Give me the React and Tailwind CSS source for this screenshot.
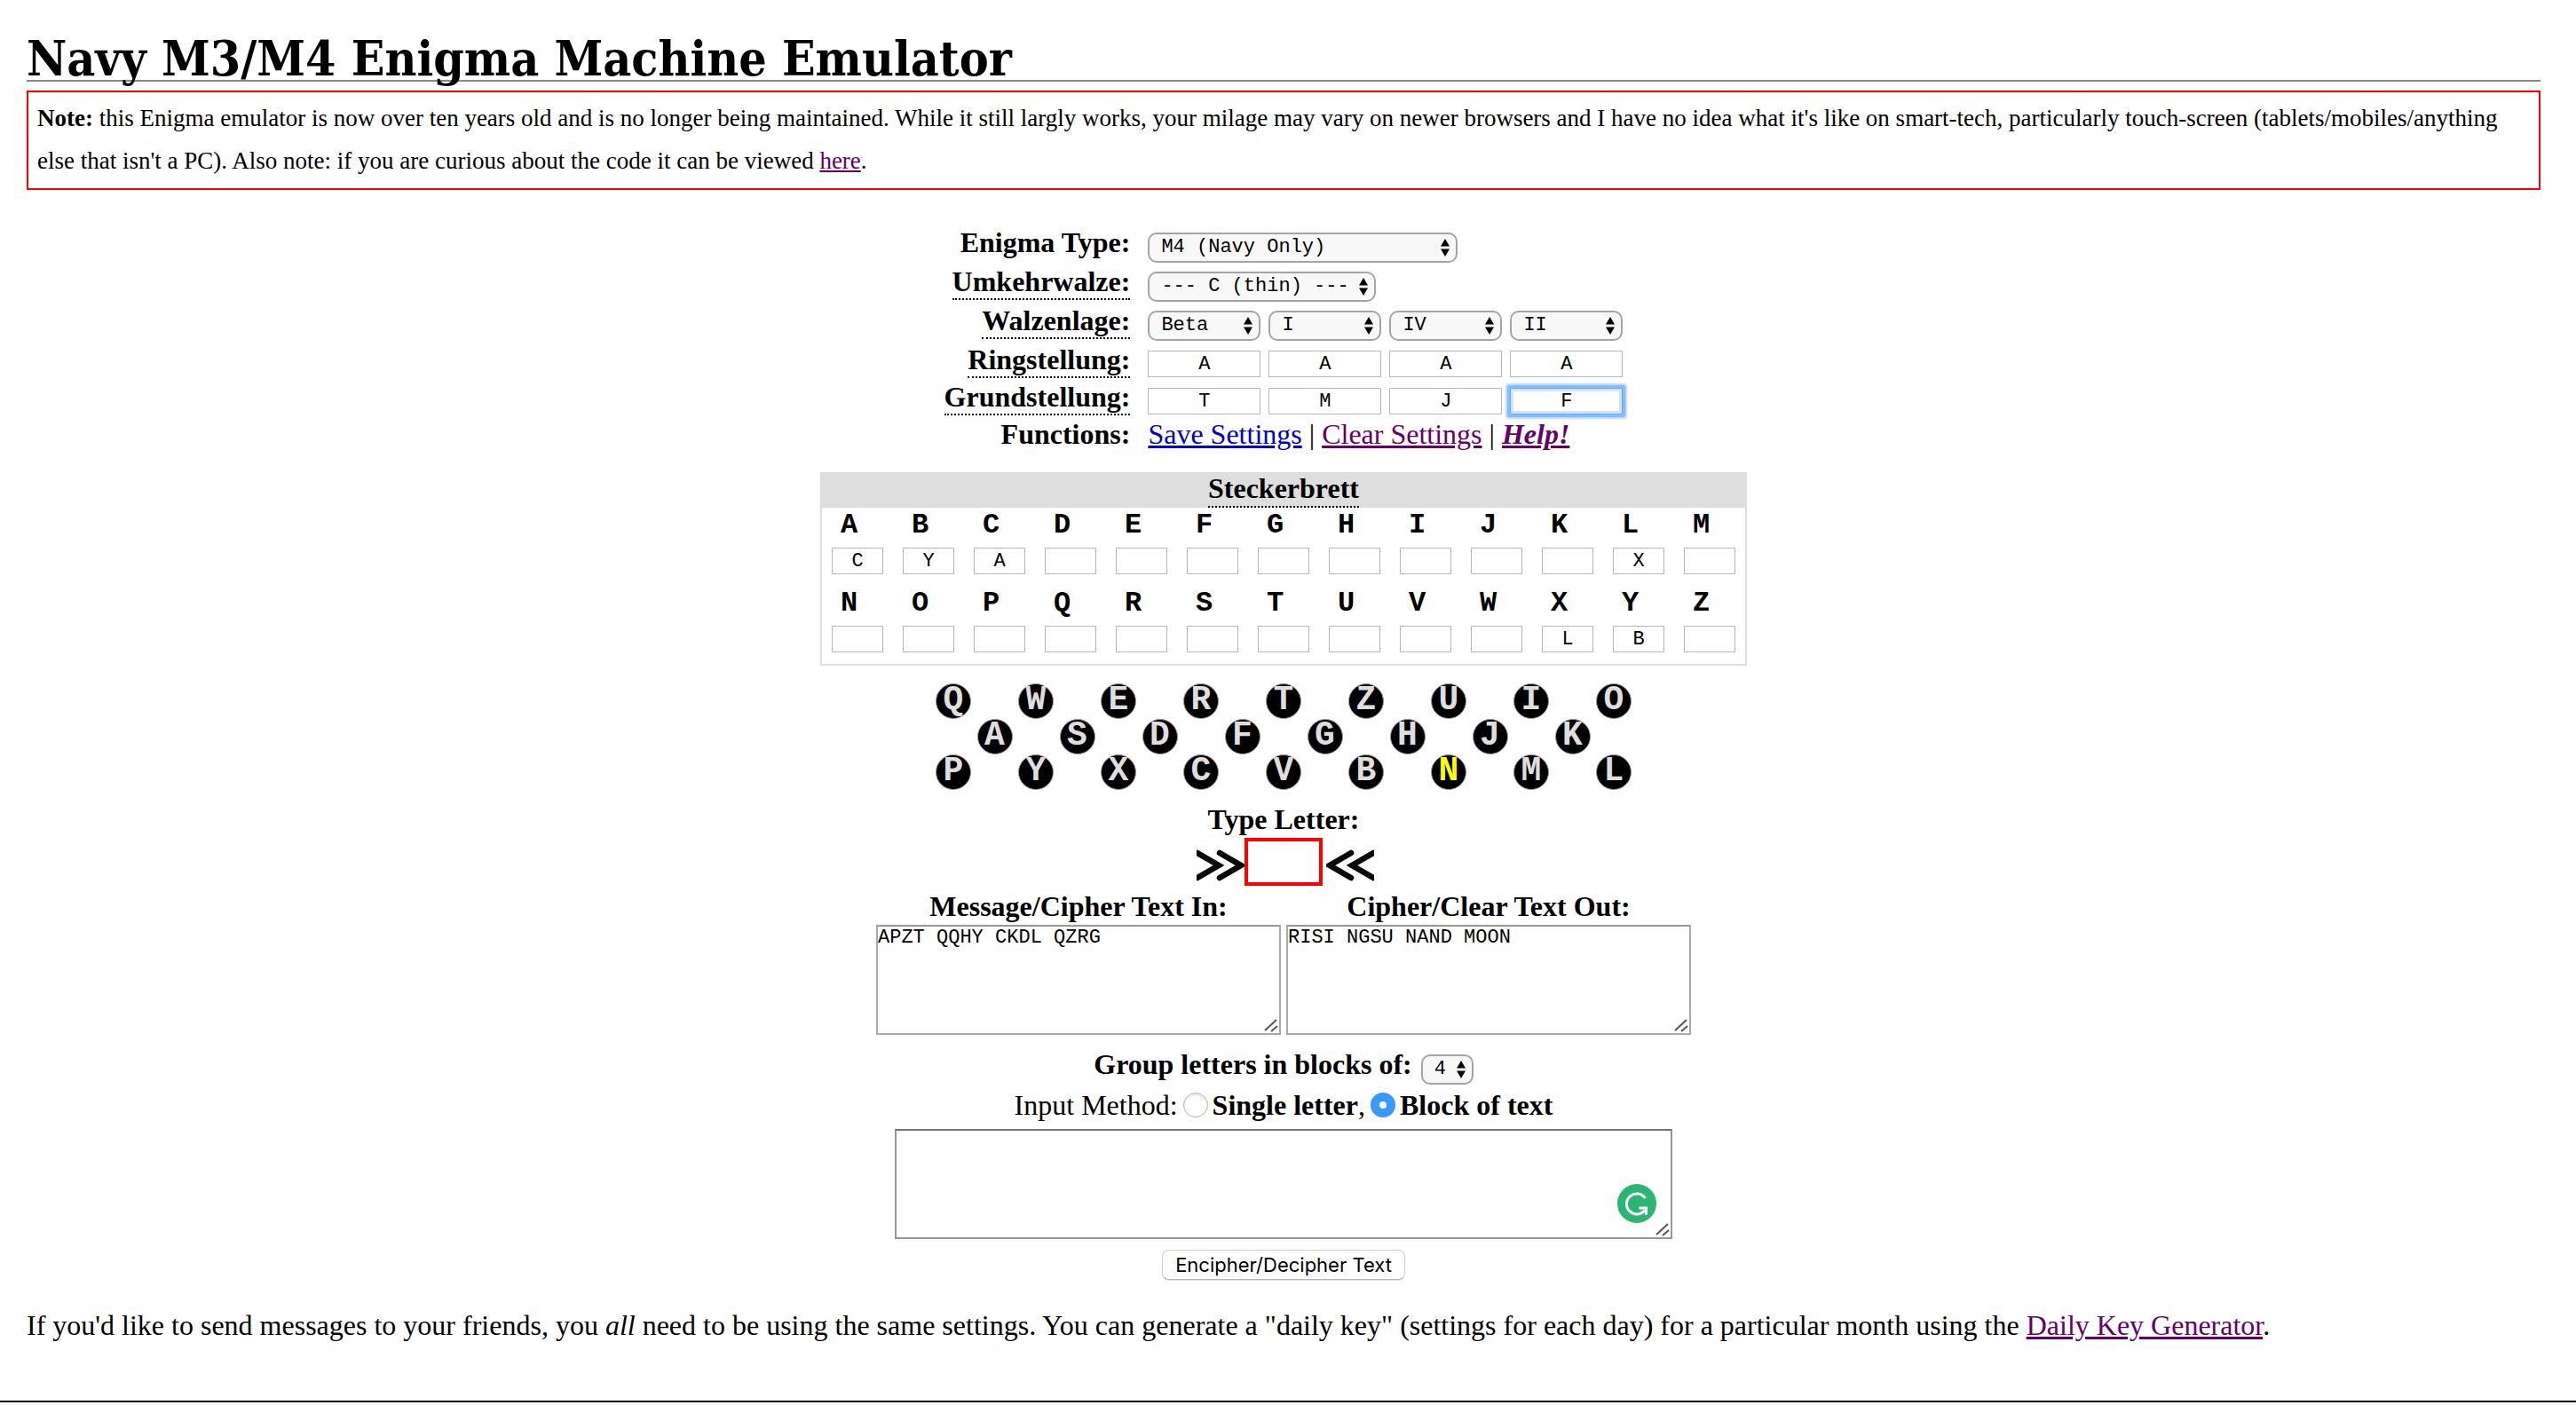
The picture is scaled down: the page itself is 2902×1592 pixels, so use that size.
import React from "react";

const MONO = "font-['Liberation_Mono','Courier_New',monospace]";

function Arrows() {
  return (
    <svg
      className="pointer-events-none absolute right-2 top-1/2 -translate-y-1/2"
      width="12"
      height="22"
      viewBox="0 0 12 22"
      aria-hidden="true"
    >
      <path d="M6 1l5 8.5H1zM6 21l5-8.5H1z" fill="#000" />
    </svg>
  );
}

function Select({ id, label, options, width }) {
  return (
    <span className={`relative block ${width}`}>
      <select
        id={id}
        aria-label={label}
        className={`${MONO} block h-[34px] w-full appearance-none rounded-[10px] border-2 border-[#a5a5a5] bg-[#f8f8f8] pl-[13px] text-[22px] leading-[30px] text-black`}
      >
        {options.map((o) => (
          <option key={o}>{o}</option>
        ))}
      </select>
      <Arrows />
    </span>
  );
}

function LetterInput({ id, label, value, width, focused }) {
  return (
    <input
      id={id}
      type="text"
      maxLength={1}
      aria-label={label}
      defaultValue={value}
      className={`${MONO} block h-[30px] border text-center text-[22px] leading-7 text-black ${width} ${
        focused
          ? "rounded-[1px] border-[#5fa8f5] shadow-[0_0_0_3px_#84bdfb,0_0_2px_5px_#b9d9fc,inset_0_0_0_3px_#cfe5fe]"
          : "border-[#b8b8b8]"
      }`}
    />
  );
}

function Row({ label, dotted, height, htmlFor, children, offset }) {
  return (
    <>
      <div className={`text-right font-bold ${height}`}>
        <label
          htmlFor={htmlFor}
          className={
            dotted
              ? "inline-block border-b-2 border-dotted border-black pb-px"
              : "inline-block"
          }
        >
          {label}
        </label>
      </div>
      <div className={`flex items-start gap-[9px] ${offset}`}>{children}</div>
    </>
  );
}

function Settings() {
  return (
    <form className="mx-auto mt-[41px] grid w-fit grid-cols-[auto_auto] gap-x-5">
      <Row label="Enigma Type:" height="h-11" offset="pt-[7px]" htmlFor="type">
        <Select id="type" options={["M4 (Navy Only)", "M3"]} width="w-[349px]" />
      </Row>
      <Row label="Umkehrwalze:" dotted height="h-11" offset="pt-[7px]" htmlFor="ukw">
        <Select id="ukw" options={["--- C (thin) ---", "--- B (thin) ---"]} width="w-[257px]" />
      </Row>
      <Row label="Walzenlage:" dotted height="h-11" offset="pt-[7px]" htmlFor="rotor0">
        {["Beta", "I", "IV", "II"].map((r, i) => (
          <Select key={r} id={`rotor${i}`} label={`Walzenlage ${i + 1}`} options={[r]} width="w-[127px]" />
        ))}
      </Row>
      <Row label="Ringstellung:" dotted height="h-[42px]" offset="pt-2" htmlFor="ring0">
        {["A", "A", "A", "A"].map((v, i) => (
          <LetterInput key={i} id={`ring${i}`} label={`Ringstellung ${i + 1}`} value={v} width="w-[127px]" />
        ))}
      </Row>
      <Row label="Grundstellung:" dotted height="h-[42px]" offset="pt-2" htmlFor="ground0">
        {["T", "M", "J", "F"].map((v, i) => (
          <LetterInput
            key={i}
            id={`ground${i}`}
            label={`Grundstellung ${i + 1}`}
            value={v}
            width="w-[127px]"
            focused={i === 3}
          />
        ))}
      </Row>
      <div className="text-right font-bold">Functions:</div>
      <div className="whitespace-nowrap">
        <a href="#save" className="text-[#0000cc] underline">Save Settings</a>
        {" | "}
        <a href="#clear" className="text-[#660066] underline">Clear Settings</a>
        {" | "}
        <a href="#help" className="font-bold italic text-[#660066] underline">Help!</a>
      </div>
    </form>
  );
}

const PLUGS = { A: "C", B: "Y", C: "A", L: "X", X: "L", Y: "B" };

function Steckerbrett() {
  return (
    <section className="mx-auto mt-[25px] w-fit border-2 border-t-0 border-[#dedede]">
      <h2 className="h-10 bg-[#dedede] text-center font-bold">
        <span className="inline-block border-b-2 border-dotted border-black pb-[2px]">Steckerbrett</span>
      </h2>
      <div className="grid grid-cols-[repeat(13,80px)]">
        {"ABCDEFGHIJKLMNOPQRSTUVWXYZ".split("").map((c) => (
          <div key={c} className="pb-[13px] pl-[11px]">
            <label htmlFor={`plug${c}`} className={`${MONO} block pb-[5px] pl-[10px] text-[32px] leading-10 font-bold`}>
              {c}
            </label>
            <LetterInput id={`plug${c}`} value={PLUGS[c] || ""} width="w-[58px]" />
          </div>
        ))}
      </div>
    </section>
  );
}

function Lamps() {
  return (
    <div className="mt-5 flex flex-col items-center">
      {["QWERTZUIO", "ASDFGHJK", "PYXCVBNML"].map((row) => (
        <div key={row} className="flex gap-[53px]">
          {row.split("").map((c) => (
            <span
              key={c}
              className={`${MONO} flex size-10 justify-center rounded-full border border-[#999999] bg-black text-[38px] leading-[35px] font-bold ${
                c === "N" ? "text-[#ffff00]" : "text-[#dedede]"
              }`}
            >
              {c}
            </span>
          ))}
        </div>
      ))}
    </div>
  );
}

function Chevrons({ flip }) {
  return (
    <svg
      width="54"
      height="36"
      viewBox="0 0 54 36"
      className={flip ? "mb-[5px] -scale-x-100" : "mb-[5px]"}
      aria-hidden="true"
    >
      <path
        d="M1 4l24 14L1 32M26 4l24 14L26 32"
        fill="none"
        stroke="#0a0a0a"
        strokeWidth="6.5"
        strokeLinecap="round"
      />
    </svg>
  );
}

function TextBox({ id, label, value, frame, children }) {
  return (
    <div className="relative">
      <textarea
        id={id}
        aria-label={label}
        defaultValue={value}
        className={`${MONO} block h-[124px] w-full resize-none border-2 text-[22px] leading-[25px] text-black ${frame}`}
      />
      <svg
        className="pointer-events-none absolute bottom-[3px] right-[3px]"
        width="16"
        height="16"
        viewBox="0 0 16 16"
        aria-hidden="true"
      >
        <path d="M1 14L14 2M8 15l7-6" stroke="#555" strokeWidth="2" />
      </svg>
      {children}
    </div>
  );
}

function Radio({ id, label, checked }) {
  return (
    <>
      <input
        type="radio"
        name="method"
        id={id}
        defaultChecked={checked}
        className="mr-[5px] ml-[6px] size-7 appearance-none rounded-full border border-[#b5b5b5] bg-white shadow-[inset_0_2px_2px_#e5e5e5] checked:border-[10px] checked:border-[#3b99fc] checked:shadow-none"
      />
      <label htmlFor={id} className="font-bold">{label}</label>
    </>
  );
}

export default function App() {
  return (
    <main className="bg-white pr-10 pl-[30px] font-['Liberation_Serif','Times_New_Roman',serif] text-[32px] leading-9 text-black">
      <h1 className="mb-[10px] h-[92px] border-b-2 border-[#888888] pt-[34px] font-['DejaVu_Serif_Condensed','DejaVu_Serif',serif] text-[55px] leading-[64px] font-bold whitespace-nowrap">
        Navy M3/M4 Enigma Machine Emulator
      </h1>
      <p className="border-2 border-[#ff0000] px-[10px] pt-[5px] pb-[7px] text-[27px] leading-[48px]">
        <b>Note:</b> this Enigma emulator is now over ten years old and is no longer being maintained. While it still
        largly works, your milage may vary on newer browsers and I have no idea what it's like on smart-tech,
        particularly touch-screen (tablets/mobiles/anything else that isn't a PC). Also note: if you are curious about
        the code it can be viewed{" "}
        <a href="#code" className="text-[#660066] underline">here</a>.
      </p>

      <Settings />
      <Steckerbrett />
      <Lamps />

      <div className="mt-[15px] text-center">
        <label htmlFor="letter" className="font-bold">Type Letter:</label>
        <div className="mt-[3px] flex items-end justify-center pl-1">
          <Chevrons />
          <input
            id="letter"
            type="text"
            maxLength={1}
            className="mr-1 h-[54px] w-[88px] border-4 border-[#ff0000] text-center"
          />
          <Chevrons flip />
        </div>
      </div>

      <div className="mt-[5px] flex justify-center gap-[6px]">
        <div className="w-[456px]">
          <label htmlFor="in" className="mb-[3px] block text-center font-bold">Message/Cipher Text In:</label>
          <TextBox id="in" value="APZT QQHY CKDL QZRG" frame="border-[#a9a9a9] border-t-[#999999]" />
        </div>
        <div className="w-[456px]">
          <label htmlFor="out" className="mb-[3px] block text-center font-bold">Cipher/Clear Text Out:</label>
          <TextBox id="out" value="RISI NGSU NAND MOON" frame="border-[#a9a9a9] border-t-[#999999]" />
        </div>
      </div>

      <div className="mt-[15px] flex h-[46px] items-start justify-center gap-[10px]">
        <label htmlFor="blocks" className="font-bold">Group letters in blocks of:</label>
        <span className="pt-[7px]">
          <Select id="blocks" options={["4", "5"]} width="w-[59px]" />
        </span>
      </div>
      <div className="flex items-center justify-center">
        <span>Input Method:</span>
        <Radio id="single" label="Single letter" />
        <span>,</span>
        <Radio id="block" label="Block of text" checked />
      </div>
      <div className="mx-auto mt-[9px] w-[876px]">
        <TextBox id="message" label="Block of text" value="" frame="border-[#999999] border-t-[#777777]">
          <svg
            className="absolute right-[18px] bottom-[18px]"
            width="44"
            height="44"
            viewBox="0 0 44 44"
            aria-hidden="true"
          >
            <circle cx="22" cy="22" r="22" fill="#2bb673" />
            <path
              d="M31.500 16A11.500 11.500 0 1 0 31 29.500M24.500 27H32.500V35"
              fill="none"
              stroke="#fff"
              strokeWidth="3"
            />
          </svg>
        </TextBox>
      </div>
      <div className="mt-3 flex justify-center">
        <button
          type="button"
          className="h-[34px] rounded-lg border border-[#d0d0d0] border-b-[#b5b5b5] bg-white px-[14px] font-['Inter',sans-serif] text-[22px] leading-8 shadow-[0_1px_1px_#dddddd]"
        >
          Encipher/Decipher Text
        </button>
      </div>

      <p className="mt-[33px]">
        If you'd like to send messages to your friends, you <i>all</i> need to be using the same settings. You can
        generate a "daily key" (settings for each day) for a particular month using the{" "}
        <a href="#daily" className="text-[#660066] underline">Daily Key Generator</a>.
      </p>
      <hr className="-mr-10 mt-[67px] -ml-[30px] border-t-2 border-black" />
    </main>
  );
}
